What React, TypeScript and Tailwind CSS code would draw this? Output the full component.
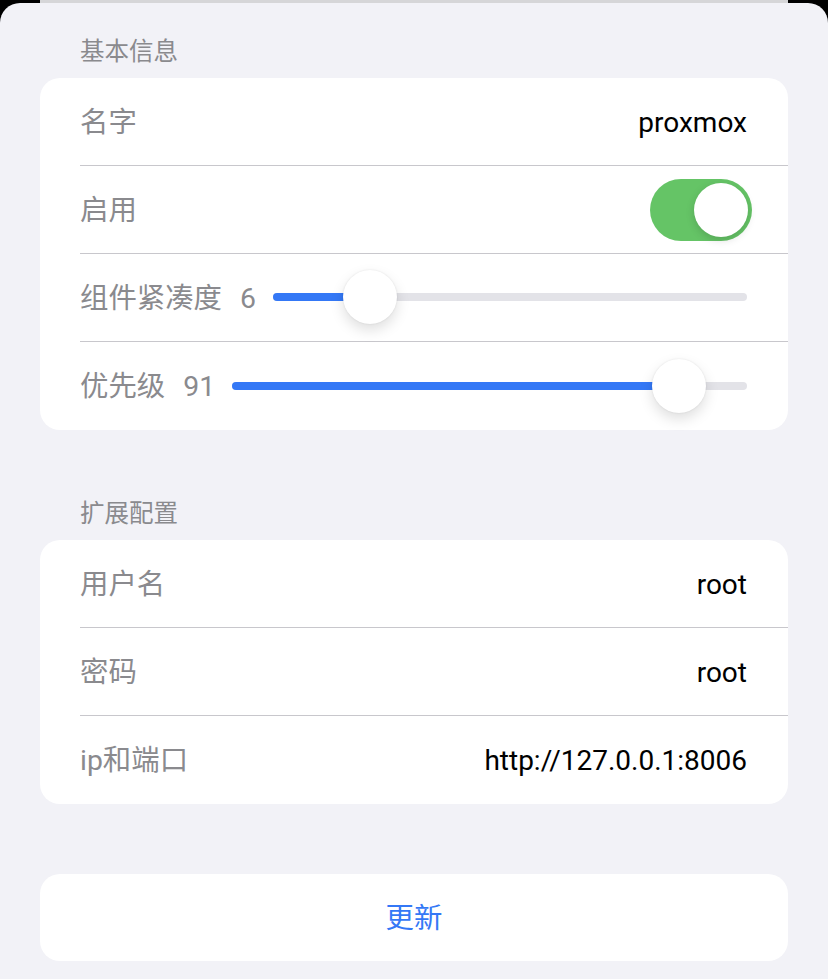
import React from 'react';

const FONT = '[font-family:Roboto,"Noto_Sans_CJK_SC",sans-serif]';

type SliderProps = { value: number; max: number };

const Slider: React.FC<SliderProps> = ({ value, max }) => {
  const frac = value / max;
  return (
    <div className="relative ml-[-1px] mt-[-3px] flex h-[54px] flex-1 items-center">
      <div className="relative h-[8px] w-full rounded-full bg-[#e3e3e8]">
        <div
          className="absolute left-0 top-0 h-full rounded-full bg-[#3478f6]"
          style={{ width: `calc(${frac} * (100% - 54px) + 27px)` }}
        />
      </div>
      <div
        className="absolute top-0 h-[54px] w-[54px] rounded-full bg-white shadow-[0_6px_14px_rgba(0,0,0,0.13),0_0_2px_rgba(0,0,0,0.1)]"
        style={{ left: `calc(${frac} * (100% - 54px))` }}
      />
    </div>
  );
};

const Toggle: React.FC<{ on: boolean }> = ({ on }) => (
  <div
    className={`flex h-[62px] w-[102px] rounded-full p-[4px] ${on ? 'justify-end bg-[#65c466]' : 'justify-start bg-[#e9e9eb]'}`}
  >
    <div className="h-[54px] w-[54px] rounded-full bg-white shadow-[0_3px_8px_rgba(0,0,0,0.15)]" />
  </div>
);

const Row: React.FC<{ last?: boolean; children: React.ReactNode }> = ({ last, children }) => (
  <div
    className={`ml-[40px] flex h-[88px] items-center pr-[41px] pt-[2px] ${last ? '' : 'border-b border-[#c8c7cc]'}`}
  >
    {children}
  </div>
);

const Label: React.FC<{ children: React.ReactNode }> = ({ children }) => (
  <span className="text-[28.4px] leading-[36px] text-[#8a8a8e]">{children}</span>
);

const Value: React.FC<{ children: React.ReactNode }> = ({ children }) => (
  <span className="ml-auto text-[28px] leading-[36px] text-black">{children}</span>
);

const SectionHeader: React.FC<{ children: React.ReactNode }> = ({ children }) => (
  <div className="pl-[40px] text-[24.5px] leading-[32px] text-[#8a8a8e]">{children}</div>
);

const App: React.FC = () => {
  const sliders = [
    { label: '组件紧凑度', value: 6, max: 36 },
    { label: '优先级', value: 91, max: 100 },
  ];

  const extras = [
    { label: '用户名', value: 'root' },
    { label: '密码', value: 'root' },
    { label: 'ip和端口', value: 'http://127.0.0.1:8006' },
  ];

  return (
    <div className={`flex h-[979px] w-[828px] flex-col overflow-hidden bg-black ${FONT}`}>
      <div className="mx-[40px] h-[3px] shrink-0 bg-[#d6d6d8]" />
      <div className="flex-1 rounded-t-[20px] bg-[#f2f2f7] px-[40px] pt-[33px]">
        <div className="mb-[10px]">
          <SectionHeader>基本信息</SectionHeader>
        </div>
        <div className="rounded-[20px] bg-white">
          <Row>
            <Label>名字</Label>
            <Value>proxmox</Value>
          </Row>
          <Row>
            <Label>启用</Label>
            <div className="ml-auto mr-[-5px] mt-[-2px]">
              <Toggle on />
            </div>
          </Row>
          {sliders.map((s, i) => (
            <Row key={s.label} last={i === sliders.length - 1}>
              <div className="flex flex-1 items-center gap-[18px]">
                <Label>{s.label}</Label>
                <Label>{s.value}</Label>
                <Slider value={s.value} max={s.max} />
              </div>
            </Row>
          ))}
        </div>

        <div className="mb-[10px] mt-[68px]">
          <SectionHeader>扩展配置</SectionHeader>
        </div>
        <div className="rounded-[20px] bg-white">
          {extras.map((e, i) => (
            <Row key={e.label} last={i === extras.length - 1}>
              <Label>{e.label}</Label>
              <Value>{e.value}</Value>
            </Row>
          ))}
        </div>

        <button className="mt-[70px] flex h-[87px] w-full items-center justify-center rounded-[20px] bg-white pt-[2px] text-[28.4px] leading-[36px] text-[#3478f6]">
          更新
        </button>
      </div>
    </div>
  );
};

export default App;
